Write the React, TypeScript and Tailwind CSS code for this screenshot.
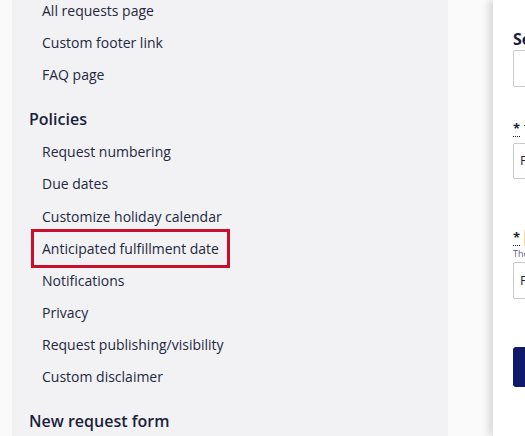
import React from 'react';

const linksTop = ['All requests page', 'Custom footer link', 'FAQ page'];

const policies = [
  'Request numbering',
  'Due dates',
  'Customize holiday calendar',
  'Anticipated fulfillment date',
  'Notifications',
  'Privacy',
  'Request publishing/visibility',
  'Custom disclaimer',
];

const NavItem: React.FC<{ label: string; active?: boolean }> = ({ label, active }) => (
  <div className="h-[32.2px] flex items-center pl-[19px]">
    <span
      className={
        active
          ? 'border-[3px] border-[#c8102e] px-[8px] h-[39px] flex items-center'
          : 'px-[11px]'
      }
    >
      {label}
    </span>
  </div>
);

const SectionTitle: React.FC<{ title: string }> = ({ title }) => (
  <div className="pt-[16px] pb-[5px] pl-[17px]">
    <h3 className="text-[16px] leading-[24px] font-semibold text-[#1b1f3b]">{title}</h3>
  </div>
);

const App: React.FC = () => {
  return (
    <div
      className="w-[525px] h-[436px] overflow-hidden flex bg-[#fafafa] text-[#23283f]"
      style={{ fontFamily: '"Open Sans", "Noto Sans", sans-serif' }}
    >
      <div className="w-[12px] shrink-0 bg-[#fafafa]" />
      <aside className="w-[436px] shrink-0 bg-[#f2f2f4] text-[14px]">
        <div className="mt-[-6px]">
          {linksTop.map((l) => (
            <NavItem key={l} label={l} />
          ))}
        </div>
        <SectionTitle title="Policies" />
        {policies.map((p) => (
          <NavItem key={p} label={p} active={p === 'Anticipated fulfillment date'} />
        ))}
        <SectionTitle title="New request form" />
      </aside>
      <div className="w-[45px] shrink-0 bg-[#fafafa]" />
      <section className="flex-1 bg-white overflow-hidden shadow-[-5px_0_7px_rgba(0,0,0,0.12)] pl-[20px] relative">
        <div className="w-[300px]">
          <h4 className="mt-[29px] text-[16px] leading-[20px] font-bold text-[#1b1f3b]">Settings</h4>
          <div className="mt-[1px] h-[37px] border border-[#c9c9c9] rounded-[2px]" />

          <div className="mt-[33px] text-[13px] leading-[16px] flex items-center">
            <span className="text-[#1b1f3b] border-b border-dotted border-[#1b1f3b] font-bold">*</span>
            <span className="ml-[4px]">Title</span>
          </div>
          <div className="mt-[6px] h-[36px] border border-[#c9c9c9] rounded-[2px] flex items-center pl-[6px] text-[13px]">
            Fulfillment
          </div>

          <div className="mt-[50px] text-[13px] leading-[16px] flex items-center">
            <span className="text-[#1b1f3b] border-b border-dotted border-[#1b1f3b] font-bold">*</span>
            <span className="ml-[4px] bg-[#fcd9a8] text-[#e08a20]">Date</span>
          </div>
          <div className="mt-[2px] text-[9px] leading-[11px] text-[#5b5f8a]">The date</div>
          <div className="mt-[3px] h-[37px] border border-[#c9c9c9] rounded-[2px] flex items-center pl-[6px] text-[13px]">
            Fulfillment
          </div>

          <div className="mt-[48px] h-[40px] w-[120px] rounded-[3px] bg-[#0f1a6b]" />
        </div>
      </section>
    </div>
  );
};

export default App;
